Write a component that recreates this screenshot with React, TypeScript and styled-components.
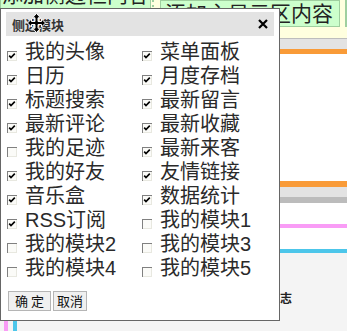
import styled, { createGlobalStyle } from "styled-components";

const GlobalStyle = createGlobalStyle`
  html, body {
    margin: 0;
    padding: 0;
    background: #f4f4f4;
    font-family: "Liberation Sans", "Noto Sans CJK SC", sans-serif;
    overflow: hidden;
  }
`;

type Item = { label: string; checked: boolean };

const items: Item[] = [
  { label: "我的头像", checked: true },
  { label: "菜单面板", checked: true },
  { label: "日历", checked: true },
  { label: "月度存档", checked: true },
  { label: "标题搜索", checked: true },
  { label: "最新留言", checked: true },
  { label: "最新评论", checked: true },
  { label: "最新收藏", checked: true },
  { label: "我的足迹", checked: false },
  { label: "最新来客", checked: true },
  { label: "我的好友", checked: true },
  { label: "友情链接", checked: true },
  { label: "音乐盒", checked: true },
  { label: "数据统计", checked: true },
  { label: "RSS订阅", checked: true },
  { label: "我的模块1", checked: false },
  { label: "我的模块2", checked: false },
  { label: "我的模块3", checked: false },
  { label: "我的模块4", checked: false },
  { label: "我的模块5", checked: false },
];

const CheckBox = ({ checked }: { checked: boolean }) => (
  <BoxSvg width="10" height="10" viewBox="0 0 10 10">
    <rect x="0" y="0" width="10" height="10" fill="#808080" />
    <rect x="1" y="1" width="9" height="9" fill="#e8e8e0" />
    <rect x="1" y="1" width="8" height="8" fill="#fbfbf8" />
    {checked && (
      <path d="M2.2 4.6 L4 6.6 L7.8 2.6" fill="none" stroke="#000" strokeWidth="1.6" />
    )}
  </BoxSvg>
);

const MoveCursor = () => (
  <CursorSvg width="19" height="20" viewBox="0 0 19 20">
    <path
      d="M9.5 0.5 L13.5 4.8 L11 4.8 L11 8.5 L14.5 8.5 L14.5 6 L18.5 10 L14.5 14 L14.5 11.5 L11 11.5 L11 15.2 L13.5 15.2 L9.5 19.5 L5.5 15.2 L8 15.2 L8 11.5 L4.5 11.5 L4.5 14 L0.5 10 L4.5 6 L4.5 8.5 L8 8.5 L8 4.8 L5.5 4.8 Z"
      fill="#000"
      stroke="#fff"
      strokeWidth="1"
    />
  </CursorSvg>
);

const App = () => {
  return (
    <>
      <GlobalStyle />
      <Page>
        <TopArea>
          <HeaderRow>
            <SideBox>添加侧边栏内容</SideBox>
            <Divider />
            <MainBox>添加主显示区内容</MainBox>
            <ExtraBox />
          </HeaderRow>
        </TopArea>
        <Stripe $h={1} $c="#bdbdbd" />
        <Stripe $h={10} $c="#e3e3e3" />
        <Stripe $h={5} $c="#f99b38" />
        <Stripe $h={127} $c="#ffffff" />
        <Stripe $h={6} $c="#f99b38" />
        <Stripe $h={10} $c="#e3e3e3" />
        <Stripe $h={6} $c="#bcbcbc" />
        <Stripe $h={21} $c="#ffffff" />
        <Stripe $h={4} $c="#f99cf6" />
        <Stripe $h={21} $c="#ffffff" />
        <Stripe $h={4} $c="#4cc6ea" />
        <LowerArea>
          <SideStrips>
            <VStrip $c="#f99cf6" />
            <VStrip $c="#4cc6ea" />
          </SideStrips>
          <LogText>日志</LogText>
        </LowerArea>
      </Page>

      <Dialog>
        <TitleBar>
          <Title>侧边模块</Title>
          <CloseIcon width="10" height="10" viewBox="0 0 10 10">
            <path d="M1 1 L9 9 M9 1 L1 9" stroke="#000" strokeWidth="2.2" />
          </CloseIcon>
          <MoveCursor />
        </TitleBar>
        <ItemGrid>
          {items.map((item) => (
            <Row key={item.label}>
              <CheckBox checked={item.checked} />
              <Label>{item.label}</Label>
            </Row>
          ))}
        </ItemGrid>
        <ButtonRow>
          <Button $w={43}>确 定</Button>
          <Button $w={34}>取消</Button>
        </ButtonRow>
      </Dialog>
    </>
  );
};

const Page = styled.div`
  display: flex;
  flex-direction: column;
  width: 347px;
  height: 331px;
  overflow: hidden;
`;

const TopArea = styled.div`
  height: 38px;
  background: #ffffdf;
`;

const HeaderRow = styled.div`
  display: flex;
  align-items: flex-start;
  height: 27px;
`;

const greenBox = `
  box-sizing: border-box;
  background: #ccffcc;
  border: 1px solid #9fcf9f;
  color: #222;
  font-size: 21px;
  white-space: nowrap;
  overflow: hidden;
`;

const SideBox = styled.div`
  ${greenBox}
  width: 151px;
  height: 45px;
  margin-top: -18px;
  padding-left: 1px;
  line-height: 23px;
`;

const Divider = styled.div`
  width: 0;
  height: 27px;
  margin: 0 6px 0 1px;
  border-left: 2px dotted #9fcf9f;
`;

const MainBox = styled.div`
  ${greenBox}
  width: 180px;
  height: 27px;
  padding-left: 4px;
  line-height: 25px;
`;

const ExtraBox = styled.div`
  ${greenBox}
  flex: 1;
  height: 27px;
  margin-left: 5px;
`;

const Stripe = styled.div<{ $h: number; $c: string }>`
  flex: none;
  height: ${(p) => p.$h}px;
  background: ${(p) => p.$c};
`;

const LowerArea = styled.div`
  flex: 1;
  display: flex;
  background: #f4f4f4;
`;

const SideStrips = styled.div`
  display: flex;
  gap: 5px;
  padding-left: 4px;
  width: 264px;
`;

const VStrip = styled.div<{ $c: string }>`
  width: 4px;
  background: ${(p) => p.$c};
`;

const LogText = styled.div`
  padding-top: 38px;
  font-size: 12px;
  font-weight: bold;
  color: #222;
  line-height: 16px;
`;

const Dialog = styled.div`
  position: absolute;
  top: 8px;
  left: 0;
  width: 280px;
  height: 313px;
  box-sizing: border-box;
  background: #ffffff;
  border: 1px solid #666;
  padding: 3px 5px 0 5px;
  display: flex;
  flex-direction: column;
`;

const TitleBar = styled.div`
  position: relative;
  height: 24px;
  background: #e3e3e3;
  display: flex;
  align-items: center;
  justify-content: space-between;
  padding: 0 6px;
`;

const Title = styled.span`
  font-size: 13px;
  font-weight: bold;
  color: #333;
  font-family: "Noto Sans CJK SC", sans-serif;
`;

const CloseIcon = styled.svg`
  display: block;
`;

const CursorSvg = styled.svg`
  position: absolute;
  left: 21px;
  top: 1px;
`;

const ItemGrid = styled.div`
  display: grid;
  grid-template-columns: 135px 1fr;
  margin-top: 4px;
  padding-left: 1px;
`;

const Row = styled.div`
  display: flex;
  align-items: flex-end;
  gap: 8px;
  height: 24px;
`;

const BoxSvg = styled.svg`
  display: block;
  flex: none;
  margin-bottom: 3px;
`;

const Label = styled.span`
  font-size: 20px;
  line-height: 24px;
  color: #2a2a2a;
  white-space: nowrap;
`;

const ButtonRow = styled.div`
  display: flex;
  gap: 2px;
  margin-top: 11px;
  padding-left: 2px;
`;

const Button = styled.button<{ $w: number }>`
  width: ${(p) => p.$w}px;
  height: 20px;
  padding: 0;
  box-sizing: border-box;
  background: #f0f0f0;
  border: 1px solid #b5b5b5;
  font-family: "Noto Sans CJK SC", sans-serif;
  font-size: 13px;
  line-height: 18px;
  color: #111;
`;

export default App;
